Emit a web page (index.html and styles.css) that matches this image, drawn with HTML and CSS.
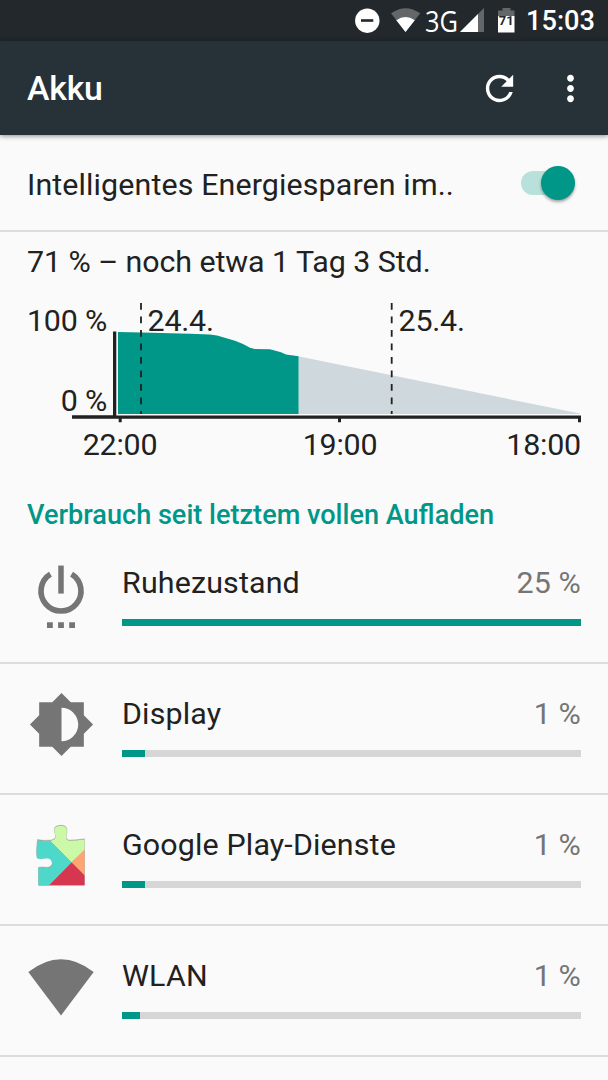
FILE: index.html
```html
<!DOCTYPE html>
<html lang="de">
<head>
  <meta charset="UTF-8">
  <meta name="viewport" content="width=device-width, initial-scale=1.0">
  <title>Akku</title>
  <link rel="stylesheet" href="styles.css">
</head>
<body>
  <div class="status-bar">
    <svg class="status-icons" width="170" height="41" viewBox="350 0 170 41">
      <circle cx="367.3" cy="20.7" r="12.2" fill="#fff"/>
      <path d="M361 20.5h12.3" stroke="#22282b" stroke-width="2.6"/>
      <path d="M391 13.300Q405.500 3 420.300 13.300L405.500 32z" fill="#646769"/>
      <path d="M396.300 20.200Q405.500 14 414.800 20.200L405.500 32z" fill="#fff"/>
      <text class="network" x="425" y="31.800" textLength="33" lengthAdjust="spacingAndGlyphs">3G</text>
      <path d="M484 8v24h-24z" fill="#646769"/>
      <path d="M478 14v18h-18z" fill="#fff"/>
      <path d="M498 16.500V10.500h4.500V8h8v2.500h4v6z" fill="#646769"/>
      <path d="M498 16h16.500v16.500H498z" fill="#fff"/>
      <text class="level" x="506.200" y="25.300">71</text>
    </svg>
    <span class="clock">15:03</span>
  </div>

  <header class="app-bar">
    <h1>Akku</h1>
    <svg class="refresh" width="41" height="41" viewBox="0 0 24 24">
      <path fill="#fff" d="M17.650 6.350C16.200 4.900 14.210 4 12 4c-4.420 0-7.990 3.580-7.990 8s3.570 8 7.990 8c3.730 0 6.840-2.550 7.730-6h-2.080c-.82 2.330-3.040 4-5.650 4-3.310 0-6-2.690-6-6s2.690-6 6-6c1.660 0 3.140.69 4.220 1.780L13 11h7V4l-2.350 2.350z"/>
    </svg>
    <svg class="more" width="41" height="41" viewBox="0 0 24 24">
      <path fill="#fff" d="M12 8c1.100 0 2-.9 2-2s-.9-2-2-2-2 .9-2 2 .9 2 2 2zm0 2c-1.100 0-2 .9-2 2s.9 2 2 2 2-.9 2-2-.9-2-2-2zm0 6c-1.100 0-2 .9-2 2s.9 2 2 2 2-.9 2-2-.9-2-2-2z"/>
    </svg>
  </header>

  <main>
    <div class="setting">
      <span>Intelligentes Energiesparen im..</span>
      <div class="switch"><div class="thumb"></div></div>
    </div>

    <section class="battery">
      <p class="summary">71 % – noch etwa 1 Tag 3 Std.</p>
      <svg class="chart" width="608" height="180" viewBox="0 290 608 180">
        <path fill="#cfd8dc" d="M298 356.300L580 413.500V414H298z"/>
        <path fill="#009688" d="M118 332L142 332.500L190 333.700L210 334.500L217 335.400L235 340.700L243 344L250 347.700L255 348.900L270 349.300L281 352.300L286 354.500L298.500 356.300V414H118z"/>
        <path class="day" d="M141 303V414M391.700 303V414"/>
        <path fill="#212121" d="M113 331.500h3.300v84H581v6.800h-3v-3.500H341v3.500h-3v-3.500H121.700v3.500h-3v-3.500H72v-3.500h41z"/>
        <text x="107" y="331.300" text-anchor="end">100 %</text>
        <text x="107" y="410.500" text-anchor="end">0 %</text>
        <text x="147.500" y="331.300">24.4.</text>
        <text x="398.500" y="331.300">25.4.</text>
        <text x="120" y="455.300" text-anchor="middle">22:00</text>
        <text x="340" y="455.300" text-anchor="middle">19:00</text>
        <text x="581" y="455.300" text-anchor="end">18:00</text>
      </svg>
    </section>

    <h2>Verbrauch seit letztem vollen Aufladen</h2>

    <ul class="usage">
      <li>
        <svg class="icon power" width="82" height="82" viewBox="0 0 24 24">
          <path fill="#757575" d="M11.200 2.800h1.600v8.200h-1.600z"/>
          <path fill="none" stroke="#757575" stroke-width="1.650" d="M8.900 5.300A5.850 5.850 0 1 0 15.100 5.300"/>
          <path fill="#757575" d="M7.900 19.400h1.700v1.700H7.900zM11.150 19.400h1.700v1.700h-1.700zM14.400 19.400h1.700v1.700h-1.700z"/>
        </svg>
        <div class="info">
          <div class="line"><span>Ruhezustand</span><span class="value">25 %</span></div>
          <div class="bar"><div class="fill" style="width: 100%"></div></div>
        </div>
      </li>
      <li>
        <svg class="icon" width="67" height="67" viewBox="0 0 24 24">
          <path fill="#757575" d="M20 15.310L23.310 12 20 8.690V4h-4.690L12 .69 8.690 4H4v4.690L.69 12 4 15.310V20h4.690L12 23.310 15.310 20H20v-4.690zM12 18V6c3.310 0 6 2.690 6 6s-2.690 6-6 6z"/>
        </svg>
        <div class="info">
          <div class="line"><span>Display</span><span class="value">1 %</span></div>
          <div class="bar"><div class="fill" style="width: 5%"></div></div>
        </div>
      </li>
      <li>
        <svg class="icon" width="68" height="68" viewBox="0 0 68 68">
          <defs>
            <clipPath id="puzzle">
              <path d="M10.500 18Q18 19.500 24.500 18.500Q29 17.500 28.500 13.500Q26.500 8.500 28 5.700Q30 3.500 34.500 3.800Q38.500 4 39.500 6.500Q40.500 9 39.500 12.500Q38 17.500 41.500 18.500Q48 19 57.500 17.300V63H11.500V45.500Q13.500 44.500 17.500 45.700Q22.500 46.500 24.500 44Q26 41 24.500 38.500Q22.500 35.500 17.500 36.500Q13.500 37.500 10 36.300Q9 29 10.500 18z"/>
            </clipPath>
          </defs>
          <path class="edge" d="M10.500 17.500Q18 19 24.500 18Q29 17 28.500 13Q26.500 8 28 5.200Q30 3 34.500 3.300Q38.500 3.500 39.500 6Q40.500 8.500 39.500 12Q38 17 41.500 18Q48 18.500 57.500 16.800V63.500H11.500V45.500Q13.500 44.500 17.500 45.200Q22.500 46 24.500 43.500Q26 41 24.500 38Q22.500 35 17.500 36Q13.500 37 10 35.800Q9 29 10.500 17.500z"/>
          <g clip-path="url(#puzzle)">
            <path fill="#ccf9a8" d="M8 2h50v26L44.500 40.500L22.500 18.500H8z"/>
            <path fill="#4dd8ca" d="M8 18.500h15L45 41L22 64H8z"/>
            <path fill="#ffa573" d="M58 27v27L44.500 40.500z"/>
            <path fill="#d6364f" d="M44.500 40.500L58 54v10H21.500z"/>
          </g>
        </svg>
        <div class="info">
          <div class="line"><span>Google Play-Dienste</span><span class="value">1 %</span></div>
          <div class="bar"><div class="fill" style="width: 5%"></div></div>
        </div>
      </li>
      <li>
        <svg class="icon" width="68" height="68" viewBox="0 0 68 68">
          <path fill="#757575" d="M1.300 19Q34-6.500 66.700 19L34 62.500z"/>
        </svg>
        <div class="info">
          <div class="line"><span>WLAN</span><span class="value">1 %</span></div>
          <div class="bar"><div class="fill" style="width: 4%"></div></div>
        </div>
      </li>
    </ul>
  </main>
</body>
</html>
```
FILE: styles.css
```css
* {
  box-sizing: border-box;
}
body {
  margin: 0;
  height: 1080px;
  overflow: hidden;
  background: #fafafa;
  color: #212121;
  font-family: Roboto, sans-serif;
  font-size: 30.4px;
}
.status-bar {
  display: flex;
  align-items: center;
  height: 41px;
  padding-left: 350px;
  background: #22282b;
  color: #fff;
}
.network {
  font-family: "Open Sans", sans-serif;
  font-size: 30px;
  fill: #fff;
}
.level {
  font-size: 13px;
  font-weight: 700;
  text-anchor: middle;
  fill: #22282b;
}
.clock {
  margin-left: 6px;
  padding-top: 1px;
  font-size: 27.2px;
  font-weight: 500;
}
.app-bar {
  display: flex;
  align-items: center;
  height: 94px;
  padding: 0 17px 0 27px;
  background: #263238;
  color: #fff;
  box-shadow: 0 1px 5px rgba(0, 0, 0, 0.45);
}
.app-bar h1 {
  flex: 1;
  margin: 0;
  font-size: 33.8px;
  font-weight: 500;
  letter-spacing: -0.2px;
}
.refresh {
  margin-right: 30px;
}
.setting {
  display: flex;
  align-items: center;
  justify-content: space-between;
  height: 97px;
  padding: 4px 33px 0 27px;
  border-bottom: 2px solid #dcdcdc;
  letter-spacing: 0.12px;
}
.switch {
  display: flex;
  align-items: center;
  justify-content: flex-end;
  width: 54px;
  height: 24px;
  margin-bottom: 4px;
  border-radius: 12px;
  background: #b8e1dc;
}
.thumb {
  width: 34px;
  height: 34px;
  border-radius: 50%;
  background: #009688;
  box-shadow: 0 2px 3px rgba(0, 0, 0, 0.35);
}
.battery {
  height: 238px;
}
.summary {
  height: 58px;
  margin: 0;
  padding: 12px 27px 0;
  line-height: 36px;
  letter-spacing: -0.07px;
}
.chart {
  display: block;
}
.chart text {
  fill: #212121;
  letter-spacing: -0.2px;
}
.day {
  stroke: #212121;
  stroke-width: 1.8;
  stroke-dasharray: 6.75 6.75;
}
h2 {
  height: 63px;
  margin: 0;
  padding: 27px 27px 0;
  color: #009688;
  font-size: 27.1px;
  font-weight: 500;
  line-height: 36px;
}
.usage {
  margin: 0;
  padding: 0;
  list-style: none;
}
.usage li {
  display: grid;
  grid-template-columns: 122px 459px;
  height: 131px;
  border-bottom: 2px solid #dcdcdc;
}
.icon {
  justify-self: center;
  align-self: center;
  margin-bottom: 8px;
}
.power {
  margin-bottom: 2px;
}
.info {
  padding-top: 32px;
}
.line {
  display: flex;
  justify-content: space-between;
  line-height: 36px;
  letter-spacing: 0.15px;
}
.value {
  color: #757575;
}
.bar {
  height: 7px;
  margin-top: 18px;
  background: #d6d6d6;
}
.fill {
  height: 100%;
  background: #009688;
}
.edge {
  fill: #777;
  stroke: #bbb;
  stroke-width: 0.6;
}
```
